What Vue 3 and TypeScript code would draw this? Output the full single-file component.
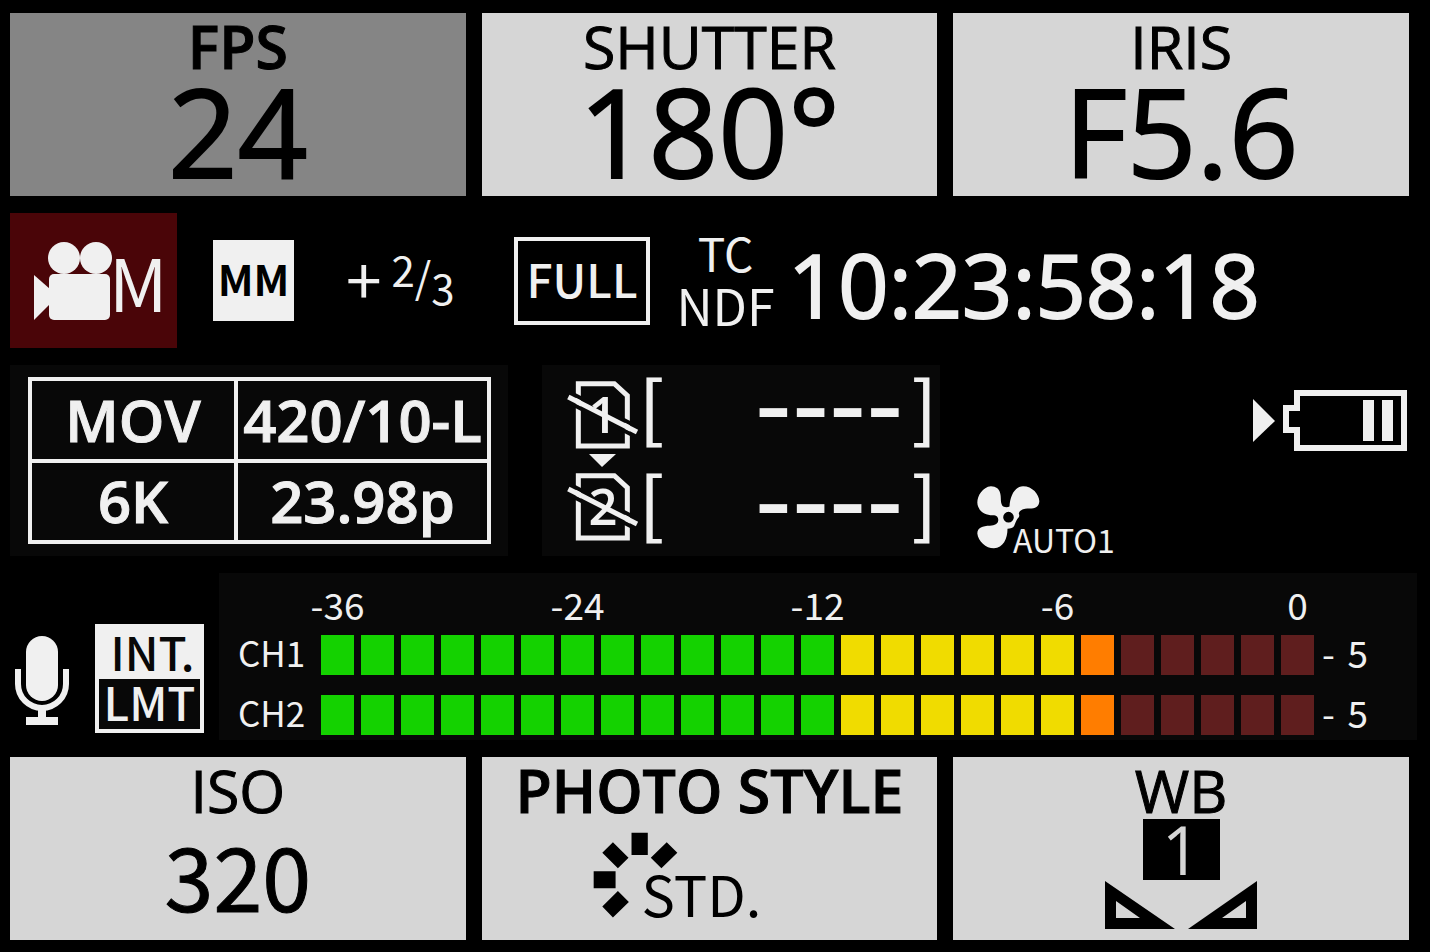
<script setup lang="ts">
type Level = 'green' | 'yellow' | 'orange' | 'red'

const segments: Level[] = [
  ...Array<Level>(13).fill('green'),
  ...Array<Level>(6).fill('yellow'),
  'orange',
  ...Array<Level>(5).fill('red'),
]

const scale = ['-36', '-24', '-12', '-6', '0']

const channels = [
  { name: 'CH1', peak: '5' },
  { name: 'CH2', peak: '5' },
]

const slots = [1, 2]
</script>

<template>
  <main class="monitor">
    <section class="tiles">
      <button type="button" class="tile active">
        <span class="heading strong">FPS</span>
        <span class="figure">24</span>
      </button>
      <button type="button" class="tile">
        <span class="heading">SHUTTER</span>
        <span class="figure">180°</span>
      </button>
      <button type="button" class="tile">
        <span class="heading">IRIS</span>
        <span class="figure">F5.6</span>
      </button>
    </section>

    <section class="status">
      <div class="mode">
        <svg class="camera" viewBox="0 0 80 80" aria-hidden="true">
          <circle cx="31" cy="17" r="16" />
          <circle cx="63" cy="17" r="16" />
          <rect x="16" y="33" width="61" height="46" rx="5" />
          <path d="M1 34 17 48V63L1 79Z" />
        </svg>
        <span class="mode-letter">M</span>
      </div>
      <div class="metering">MM</div>
      <div class="exposure">
        <span class="sign">+</span>
        <span class="numerator">2</span>
        <span class="slash">/</span>
        <span class="denominator">3</span>
      </div>
      <div class="area">FULL</div>
      <div class="tc">
        <span class="tc-top">TC</span>
        <span class="tc-bottom">NDF</span>
      </div>
      <time class="timecode">10:23:58:18</time>
    </section>

    <section class="media">
      <div class="panel format">
        <table>
          <tbody>
            <tr><td>MOV</td><td>420/10-L</td></tr>
            <tr><td>6K</td><td>23.98p</td></tr>
          </tbody>
        </table>
      </div>

      <div class="panel cards">
        <div class="card-icons">
          <template v-for="n in slots" :key="n">
            <svg v-if="n === 2" class="next" viewBox="0 0 72 22" aria-hidden="true">
              <path d="M22 4H49L35 17Z" />
            </svg>
            <svg class="card" viewBox="80 60 216 210" aria-hidden="true">
              <path class="outline" d="M114 71H222L261 107V258H114Z" />
              <path class="cut" d="M84 127 288 231M84 95 292 201" />
              <text x="188" y="220" text-anchor="middle">{{ n }}</text>
              <path class="strike" d="M84 111 290 216" />
            </svg>
          </template>
        </div>
        <div class="slots">
          <div v-for="n in slots" :key="n" class="slot">
            <span class="bracket">[</span>
            <span class="dashes">----</span>
            <span class="bracket">]</span>
          </div>
        </div>
      </div>

      <div class="fan">
        <svg viewBox="111 349 190 190" aria-hidden="true">
          <path
            fill-rule="evenodd"
            d="M190 411C181 402 184 388 182 376C180 358 168 350 153 350C128 352 112 379 112 399C113 426 138 439 163 437C172 438 176 445 175 453C174 463 165 468 150 469C128 469 112 475 112 492C114 515 138 537 162 537C190 536 203 508 203 478C212 477 220 476 223 470C227 461 229 450 237 443C240 438 238 436 237 431C242 419 255 417 269 417C287 417 298 411 299 395C298 374 278 350 250 350C226 351 211 376 209 411C203 414 196 413 190 411ZM222 443A16 16 0 1 0 190 443A16 16 0 1 0 222 443Z"
          />
        </svg>
        <span>AUTO1</span>
      </div>

      <svg class="battery" viewBox="0 0 154 61" role="img" aria-label="Battery">
        <path class="solid" d="M0 9 22 31 0 52Z" />
        <path class="case" d="M44 3H151V58H44V40H33V18H44Z" />
        <path class="solid" d="M110 10H121V51H110ZM129 10H140V51H129Z" />
      </svg>
    </section>

    <section class="audio">
      <svg class="mic" viewBox="0 0 54 89" role="img" aria-label="Microphone">
        <rect x="11" y="0" width="32" height="65" rx="16" />
        <path class="arc" d="M3 33V48A24 24 0 0 0 51 48V33" />
        <path d="M23 72H31V81H43V89H11V81H23Z" />
      </svg>
      <div class="limiter">
        <span class="limiter-top">INT.</span>
        <span class="limiter-bottom">LMT</span>
      </div>
      <div class="levels">
        <div class="scale">
          <span v-for="mark in scale" :key="mark">{{ mark }}</span>
        </div>
        <div v-for="channel in channels" :key="channel.name" class="channel">
          <span class="name">{{ channel.name }}</span>
          <div class="bar">
            <i v-for="(level, i) in segments" :key="i" :class="level"></i>
          </div>
          <span class="peak"><span>-</span><span>{{ channel.peak }}</span></span>
        </div>
      </div>
    </section>

    <section class="tiles">
      <button type="button" class="tile">
        <span class="heading">ISO</span>
        <span class="figure small">320</span>
      </button>
      <button type="button" class="tile">
        <span class="heading strong">PHOTO STYLE</span>
        <span class="style">
          <svg viewBox="340 270 256 258" aria-hidden="true">
            <path
              d="M456 272H505V339H456ZM400 300 447 347 415 379 368 332ZM562 300 594 332 546 379 514 347ZM342 388H408V439H342ZM415 447 448 480 400 527 368 494Z"
            />
          </svg>
          <span>STD.</span>
        </span>
      </button>
      <button type="button" class="tile">
        <span class="heading">WB</span>
        <span class="preset">1</span>
        <svg class="balance" viewBox="0 0 154 50" aria-hidden="true">
          <path
            fill-rule="evenodd"
            d="M1 1 71 49H1ZM12 21V38H36ZM153 1V49H84ZM142 21 118 38H142Z"
          />
        </svg>
      </button>
    </section>
  </main>
</template>

<style>
body {
  margin: 0;
  background: #000;
}
</style>

<style scoped>
.monitor {
  display: flex;
  flex-direction: column;
  gap: 17px;
  box-sizing: border-box;
  min-height: 100vh;
  padding: 13px 21px 12px 10px;
  background: #000;
  color: #f0f0f0;
  fill: #f0f0f0;
  font-family: "Noto Sans CJK JP", "Noto Sans", sans-serif;
}

svg {
  display: block;
  flex: none;
}

.tiles {
  display: grid;
  grid-template-columns: repeat(3, 1fr);
  gap: 16px;
}

.tile {
  display: flex;
  flex-direction: column;
  align-items: center;
  height: 183px;
  padding: 4px 0 0;
  border: 0;
  background: #d6d6d6;
  color: #000;
  fill: #000;
  font-family: "Open Sans", "Noto Sans", sans-serif;
}

.tile.active {
  background: #858585;
}

.heading {
  font-size: 59px;
  line-height: 58px;
  -webkit-text-stroke: 1px currentColor;
}

.strong {
  font-weight: 600;
}

.figure {
  font-size: 122px;
  line-height: 112px;
  -webkit-text-stroke: 2px currentColor;
}

.figure.small {
  font-family: "Noto Sans CJK JP", sans-serif;
  font-size: 88px;
  line-height: 110px;
  -webkit-text-stroke: 1px currentColor;
}

.status {
  display: flex;
  align-items: center;
  height: 135px;
}

.mode {
  display: flex;
  align-items: center;
  align-self: stretch;
  box-sizing: border-box;
  width: 167px;
  padding-left: 23px;
  background: #4a0508;
}

.camera {
  width: 80px;
  height: 80px;
}

.mode-letter {
  margin-left: -4px;
  font-size: 72px;
  line-height: 80px;
}

.metering {
  width: 81px;
  height: 81px;
  margin-left: 36px;
  background: #f0f0f0;
  color: #000;
  font-size: 42px;
  font-weight: 700;
  line-height: 76px;
  text-align: center;
}

.exposure {
  display: flex;
  align-items: center;
  width: 110px;
  margin-left: 52px;
  font-size: 42px;
  line-height: 42px;
}

.sign {
  margin-right: 10px;
  padding-bottom: 8px;
  font-size: 64px;
}

.numerator {
  padding-bottom: 24px;
}

.slash {
  padding-bottom: 12px;
}

.denominator {
  padding-top: 12px;
}

.area {
  box-sizing: border-box;
  width: 136px;
  height: 88px;
  margin-left: 58px;
  border: 4px solid #f0f0f0;
  font-size: 46px;
  font-weight: 500;
  line-height: 74px;
  text-align: center;
}

.tc {
  display: flex;
  flex-direction: column;
  align-items: center;
  width: 93px;
  margin-left: 29px;
  padding-bottom: 6px;
  line-height: 52px;
}

.tc-top {
  font-size: 46px;
}

.tc-bottom {
  font-size: 50px;
}

.timecode {
  margin-left: 16px;
  padding-top: 6px;
  font-family: "Open Sans", "Noto Sans", sans-serif;
  font-size: 88px;
  line-height: 90px;
  white-space: nowrap;
  -webkit-text-stroke: 2px currentColor;
}

.media {
  display: flex;
  height: 191px;
}

.panel {
  box-sizing: border-box;
  background: #080808;
}

.format {
  width: 498px;
  padding: 12px 17px 12px 18px;
}

table {
  width: 100%;
  height: 167px;
  border-collapse: collapse;
  table-layout: fixed;
}

td {
  padding: 0;
  border: 4px solid #f0f0f0;
  font-family: "Open Sans", "Noto Sans", sans-serif;
  font-size: 58px;
  font-weight: 600;
  line-height: 72px;
  text-align: center;
  white-space: nowrap;
  -webkit-text-stroke: 1px currentColor;
}

td:first-child {
  width: 44%;
}

.cards {
  display: flex;
  width: 398px;
  margin-left: 34px;
  padding: 12px 3px 0 25px;
}

.card-icons {
  padding-top: 3px;
}

.card {
  width: 72px;
  height: 70px;
  overflow: visible;
}

.card text {
  font-family: "Open Sans", "Noto Sans", sans-serif;
  font-size: 152px;
  font-weight: 600;
}

.outline,
.strike {
  fill: none;
  stroke: #f0f0f0;
  stroke-width: 15;
}

.cut {
  fill: none;
  stroke: #080808;
  stroke-width: 12;
}

.next {
  width: 72px;
  height: 22px;
}

.slots {
  display: flex;
  flex: 1;
  flex-direction: column;
  gap: 24px;
}

.slot {
  display: flex;
  align-items: flex-start;
  height: 72px;
}

.bracket {
  font-size: 72px;
  font-weight: 500;
  line-height: 54px;
}

.dashes {
  flex: 1;
  margin-right: 8px;
  font-size: 104px;
  font-weight: 500;
  line-height: 40px;
  text-align: right;
}

.fan {
  display: flex;
  align-items: flex-end;
  margin-left: 37px;
}

.fan svg {
  width: 63px;
  height: 63px;
  margin-bottom: 7px;
}

.fan span {
  margin-left: -27px;
  font-size: 32px;
  line-height: 34px;
}

.battery {
  width: 154px;
  height: 61px;
  margin: 25px 2px 0 auto;
}

.case {
  fill: none;
  stroke: #f0f0f0;
  stroke-width: 6;
}

.audio {
  display: flex;
  align-items: flex-end;
  height: 167px;
  margin-right: -8px;
}

.mic {
  width: 54px;
  height: 89px;
  margin: 0 26px 15px 5px;
}

.arc {
  fill: none;
  stroke: #f0f0f0;
  stroke-width: 6;
}

.limiter {
  display: flex;
  flex-direction: column;
  box-sizing: border-box;
  width: 109px;
  height: 109px;
  margin: 0 15px 7px 0;
  border: 4px solid #f0f0f0;
  text-align: center;
}

.limiter-top {
  height: 51px;
  padding-left: 6px;
  background: #f0f0f0;
  color: #080808;
  font-size: 46px;
  font-weight: 500;
  line-height: 46px;
}

.limiter-bottom {
  flex: 1;
  background: #080808;
  font-size: 46px;
  font-weight: 500;
  line-height: 44px;
}

.levels {
  flex: 1;
  align-self: stretch;
  background: #080808;
  font-size: 37px;
}

.scale {
  display: grid;
  grid-template-columns: repeat(25, minmax(0, 1fr));
  column-gap: 7px;
  margin: 0 103px 0 102px;
  line-height: 62px;
}

.scale span {
  display: flex;
  justify-content: center;
}

.scale span:nth-child(2) {
  grid-column: 7;
}

.scale span:nth-child(3) {
  grid-column: 13;
}

.scale span:nth-child(4) {
  grid-column: 19;
}

.scale span:nth-child(5) {
  grid-column: 25;
}

.channel {
  display: grid;
  grid-template-columns: 83px minmax(0, 1fr) 103px;
  margin-bottom: 20px;
  padding-left: 19px;
  line-height: 34px;
}

.name {
  font-size: 35px;
}

.bar {
  display: grid;
  grid-template-columns: repeat(25, minmax(0, 1fr));
  gap: 7px;
  height: 40px;
}

.green {
  background: #14d200;
}

.yellow {
  background: #f0dc00;
}

.orange {
  background: #ff7d00;
}

.red {
  background: #5f1e1e;
}

.peak {
  display: flex;
  justify-content: space-between;
  width: 46px;
  margin-left: 8px;
}

.style {
  display: flex;
  align-items: flex-end;
  padding: 13px 65px 0 0;
}

.style svg {
  width: 85px;
  height: 86px;
}

.style span {
  margin-left: -36px;
  font-family: "Noto Sans CJK JP", sans-serif;
  font-size: 56px;
  line-height: 50px;
}

.preset {
  width: 77px;
  height: 61px;
  background: #000;
  color: #d6d6d6;
  font-size: 68px;
  line-height: 59px;
}

.balance {
  width: 154px;
  height: 50px;
}
</style>
